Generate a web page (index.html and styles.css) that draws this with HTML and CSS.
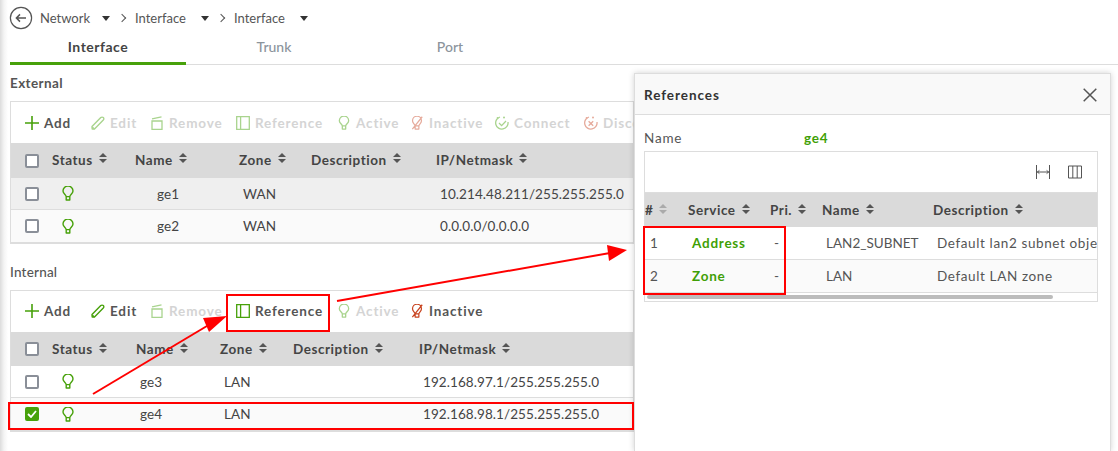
FILE: index.html
```html
<!DOCTYPE html>
<html lang="en">
<head>
<meta charset="utf-8">
<title>Interface</title>
<link rel="stylesheet" href="styles.css">
</head>
<body>
<svg class="defs" width="0" height="0">
  <defs>
    <symbol id="i-plus" viewBox="0 0 14 14"><path d="M7 0v14M0 7h14" fill="none" stroke="currentColor" stroke-width="1.6"/></symbol>
    <symbol id="i-edit" viewBox="0 0 14 14"><path d="M1 10.5 9.8 1.6a1.7 1.7 0 0 1 2.5 2.5L3.5 13H1.2z" fill="none" stroke="currentColor" stroke-width="1.4" stroke-linejoin="round"/><path d="M1.2 10.8 3.4 13" fill="none" stroke="currentColor" stroke-width="1.2"/></symbol>
    <symbol id="i-remove" viewBox="0 0 14 14"><path d="M2 5h10v8.5H2zM2 2.8 11.5.8" fill="none" stroke="currentColor" stroke-width="1.3"/></symbol>
    <symbol id="i-ref" viewBox="0 0 14 14"><path d="M.7.7h12.6v12.6H.7zM4.6.7v12.6" fill="none" stroke="currentColor" stroke-width="1.3"/></symbol>
    <symbol id="i-bulb" viewBox="0 0 12 15"><path d="M4.2 10.6C3.8 8.6 1 7.6 1 5a5 5 0 0 1 10 0c0 2.6-2.8 3.6-3.2 5.6zM4.2 10.6V14h3.6v-3.4" fill="none" stroke="currentColor" stroke-width="1.4" stroke-linejoin="round"/></symbol>
    <symbol id="i-off" viewBox="0 0 14 15"><path d="M5 10.6C4.6 8.6 2.2 7.6 2.2 5a4.8 4.8 0 0 1 9.6 0c0 2.6-2.4 3.6-2.8 5.6zM5 10.6V14h4v-3.4M12.6.8 2 14" fill="none" stroke="currentColor" stroke-width="1.3" stroke-linejoin="round"/></symbol>
    <symbol id="i-conn" viewBox="0 0 14 14"><path d="M5 1a6.2 6.2 0 1 0 8 5" fill="none" stroke="currentColor" stroke-width="1.3"/><path d="M4 7l2.6 2.6L11 5" fill="none" stroke="currentColor" stroke-width="1.3"/><circle cx="2.6" cy="2" r="1" fill="currentColor"/><circle cx="9" cy="1.6" r="1" fill="currentColor"/></symbol>
    <symbol id="i-disc" viewBox="0 0 14 14"><path d="M5 1a6.2 6.2 0 1 0 8 5" fill="none" stroke="currentColor" stroke-width="1.3"/><path d="M4.6 5.2l4.6 4.6M9.2 5.2 4.6 9.8" fill="none" stroke="currentColor" stroke-width="1.3"/><circle cx="2.6" cy="2" r="1" fill="currentColor"/><circle cx="9" cy="1.6" r="1" fill="currentColor"/></symbol>
    <symbol id="i-sort" viewBox="0 0 8 10"><path d="M4 0 8 4H0zM4 10 0 6h8z" fill="currentColor"/></symbol>
  </defs>
</svg>

<nav class="crumbs">
  <svg class="back" width="24" height="24" viewBox="0 0 24 24"><circle cx="12" cy="12" r="10.6" fill="none" stroke="#555" stroke-width="1.2"/><path d="M17 12H7.5M11 8.4 7.4 12l3.6 3.6" fill="none" stroke="#555" stroke-width="1.5"/></svg>
  <span class="crumb c1">Network</span><i class="caret"></i><i class="chev"></i>
  <span class="crumb c2">Interface</span><i class="caret"></i><i class="chev"></i>
  <span class="crumb c2">Interface</span><i class="caret"></i>
</nav>

<div class="tabs">
  <span class="tab on">Interface</span>
  <span class="tab">Trunk</span>
  <span class="tab">Port</span>
</div>

<main class="main">
  <h2 class="sec sec-ext">External</h2>
  <section class="box ext">
    <div class="bar">
      <span class="btn w-add"><svg class="ic plus"><use href="#i-plus"/></svg>Add</span>
      <span class="btn w-edit off"><svg class="ic"><use href="#i-edit"/></svg>Edit</span>
      <span class="btn w-rem off"><svg class="ic"><use href="#i-remove"/></svg>Remove</span>
      <span class="btn w-ref off"><svg class="ic"><use href="#i-ref"/></svg>Reference</span>
      <span class="btn w-act off"><svg class="ic"><use href="#i-bulb"/></svg>Active</span>
      <span class="btn w-ina off red"><svg class="ic"><use href="#i-off"/></svg>Inactive</span>
      <span class="btn w-con off"><svg class="ic"><use href="#i-conn"/></svg>Connect</span>
      <span class="btn off red"><svg class="ic"><use href="#i-disc"/></svg>Disconnect</span>
    </div>
    <div class="row head">
      <span class="cb"></span>
      <span class="th">Status<svg class="so"><use href="#i-sort"/></svg></span>
      <span class="th">Name<svg class="so"><use href="#i-sort"/></svg></span>
      <span class="th">Zone<svg class="so"><use href="#i-sort"/></svg></span>
      <span class="th">Description<svg class="so"><use href="#i-sort"/></svg></span>
      <span class="th">IP/Netmask<svg class="so"><use href="#i-sort"/></svg></span>
    </div>
    <div class="row item alt">
      <span class="cb"></span><svg class="blb"><use href="#i-bulb"/></svg>
      <span class="td nm">ge1</span><span class="td in">WAN</span><span class="td"></span><span class="td in">10.214.48.211/255.255.255.0</span>
    </div>
    <div class="row item soft">
      <span class="cb"></span><svg class="blb"><use href="#i-bulb"/></svg>
      <span class="td nm">ge2</span><span class="td in">WAN</span><span class="td"></span><span class="td in">0.0.0.0/0.0.0.0</span>
    </div>
  </section>

  <h2 class="sec sec-int">Internal</h2>
  <section class="box int">
    <div class="bar">
      <span class="btn w-add"><svg class="ic plus"><use href="#i-plus"/></svg>Add</span>
      <span class="btn w-edit"><svg class="ic"><use href="#i-edit"/></svg>Edit</span>
      <span class="btn w-rem off"><svg class="ic"><use href="#i-remove"/></svg>Remove</span>
      <span class="btn w-ref"><svg class="ic"><use href="#i-ref"/></svg>Reference</span>
      <span class="btn w-act off"><svg class="ic"><use href="#i-bulb"/></svg>Active</span>
      <span class="btn w-ina red"><svg class="ic"><use href="#i-off"/></svg>Inactive</span>
    </div>
    <div class="row head">
      <span class="cb"></span>
      <span class="th">Status<svg class="so"><use href="#i-sort"/></svg></span>
      <span class="th">Name<svg class="so"><use href="#i-sort"/></svg></span>
      <span class="th">Zone<svg class="so"><use href="#i-sort"/></svg></span>
      <span class="th">Description<svg class="so"><use href="#i-sort"/></svg></span>
      <span class="th">IP/Netmask<svg class="so"><use href="#i-sort"/></svg></span>
    </div>
    <div class="row item">
      <span class="cb"></span><svg class="blb"><use href="#i-bulb"/></svg>
      <span class="td in">ge3</span><span class="td in">LAN</span><span class="td"></span><span class="td in">192.168.97.1/255.255.255.0</span>
    </div>
    <div class="row item soft">
      <span class="cb checked"><svg width="10" height="8" viewBox="0 0 10 8"><path d="M1 4l3 3 5-6" fill="none" stroke="#fff" stroke-width="1.8"/></svg></span><svg class="blb"><use href="#i-bulb"/></svg>
      <span class="td in">ge4</span><span class="td in">LAN</span><span class="td"></span><span class="td in">192.168.98.1/255.255.255.0</span>
    </div>
  </section>
</main>

<aside class="panel">
  <header class="p-head">
    <span class="p-title">References</span>
    <svg width="14" height="14" viewBox="0 0 14 14"><path d="M.7.7l12.6 12.6M13.3.7.7 13.3" fill="none" stroke="#555" stroke-width="1.5"/></svg>
  </header>
  <div class="p-name"><span class="p-lbl">Name</span><b class="p-val">ge4</b></div>
  <div class="p-box">
    <div class="p-bar">
      <svg width="14" height="14" viewBox="0 0 14 14"><path d="M.5 0v14M13.5 0v14M1 7h12M3.4 5.4 1.4 7l2 1.6M10.6 5.4l2 1.6-2 1.6" fill="none" stroke="#555" stroke-width="1"/></svg>
      <svg width="14" height="14" viewBox="0 0 14 14"><path d="M.5 1h13v12H.5zM4.8 1v12M9.2 1v12" fill="none" stroke="#555" stroke-width="1"/></svg>
    </div>
    <div class="p-row p-thead">
      <span class="th">#<svg class="so so-lt"><use href="#i-sort"/></svg></span>
      <span class="th">Service<svg class="so"><use href="#i-sort"/></svg></span>
      <span class="th">Pri.<svg class="so"><use href="#i-sort"/></svg></span>
      <span class="th">Name<svg class="so"><use href="#i-sort"/></svg></span>
      <span class="th">Description<svg class="so"><use href="#i-sort"/></svg></span>
    </div>
    <div class="p-row p-item">
      <span class="pd">1</span><b class="link">Address</b><span class="pd">-</span><span class="pd">LAN2_SUBNET</span><span class="pd">Default lan2 subnet object</span>
    </div>
    <div class="p-row p-item soft">
      <span class="pd">2</span><b class="link">Zone</b><span class="pd">-</span><span class="pd">LAN</span><span class="pd">Default LAN zone</span>
    </div>
    <div class="p-scroll"><i class="p-thumb"></i></div>
  </div>
</aside>

<svg class="notes" width="1118" height="451" viewBox="0 0 1118 451">
  <g fill="none" stroke="#f00" stroke-width="2">
    <rect x="227" y="295" width="102" height="36"/>
    <rect x="9" y="403" width="624" height="26"/>
    <rect x="644" y="227" width="141" height="67"/>
    <path d="M93 394 212 323"/>
    <path d="M337 301 610 253"/>
  </g>
  <path d="M227 316 209 332 203 318z" fill="#f00"/>
  <path d="M627 250 609 261 607 245z" fill="#f00"/>
</svg>
</body>
</html>
```
FILE: styles.css
```css
* { box-sizing: border-box; }
html, body { margin: 0; height: 100%; overflow: hidden; }
body {
  width: 1118px;
  height: 451px;
  position: relative;
  padding-left: 10px;
  font-family: Lato, "Open Sans", sans-serif;
  font-size: 13.5px;
  color: #333;
  background: linear-gradient(90deg, #dcdcdc 0, #f4f4f4 4px, #fff 8px) no-repeat left top / 8px 100% #fff;
}
.defs { position: absolute; }

.crumbs { height: 36px; display: flex; align-items: center; color: #555; font-size: 13px; }
.back { margin-right: 7px; margin-left: -1px; }
.crumb { display: inline-block; }
.c1 { width: 62px; }
.c2 { width: 66px; }
.caret { width: 0; height: 0; border: 4.5px solid transparent; border-top: 5px solid #333; border-bottom: 0; margin-right: 10px; }
.chev { width: 6px; height: 6px; border-top: 1.5px solid #555; border-right: 1.5px solid #555; transform: rotate(45deg); margin-right: 10px; margin-left: -1px; }

.tabs { display: flex; height: 29px; border-bottom: 1px solid #ddd; padding-top: 1px; width: 1108px; }
.tab { width: 176px; text-align: center; font-size: 14px; font-weight: 500; color: #8c949c; border-bottom: 3px solid transparent; height: 28px; margin-bottom: -1px; padding-top: 1px; }
.tab.on { color: #444; font-weight: 700; letter-spacing: .5px; border-bottom-color: #47a10a; }

.main { width: 624px; }
.sec { margin: 0; font-size: 13.5px; font-weight: 700; color: #555; line-height: 18px; letter-spacing: .4px; }
.sec-ext { padding-top: 9px; height: 36px; }
.sec-int { padding-top: 19px; height: 46px; font-weight: 500; letter-spacing: .2px; }

.box { border: 1px solid #ddd; border-bottom-width: 2px; }
.bar { height: 41px; display: flex; align-items: center; padding-left: 14px; white-space: nowrap; }
.int .bar { padding-bottom: 2px; }
.btn { display: inline-flex; align-items: center; gap: 5px; font-weight: 700; font-size: 13.5px; color: #555; letter-spacing: .85px; flex: none; }
.ic { width: 14px; height: 14px; color: #47a10a; flex: none; }
.btn.off { color: #d4d4d4; }
.btn.off .ic { color: #a9d48e; }
.btn.red .ic { color: #c8431f; }
.btn.off.red .ic { color: #e6ab9c; }
.w-add { width: 66px; }
.w-edit { width: 59px; }
.w-rem { width: 86px; }
.w-ref { width: 101px; }
.w-act { width: 73px; }
.w-ina { width: 85px; }
.w-con { width: 89px; }

.row { display: grid; align-items: center; }
.ext .row { grid-template-columns: 41px 83px 104px 72px 125px 1fr; }
.int .row { grid-template-columns: 41px 84px 84px 73px 126px 1fr; }
.cb { width: 14px; height: 14px; margin-left: 14px; border: 2px solid #8a8f98; border-radius: 2px; background: #fff; display: flex; align-items: center; justify-content: center; }
.cb.checked { background: #47a10a; border-color: #47a10a; }
.head { height: 35px; background: #dadada; padding-bottom: 2px; }
.int .head { height: 34px; padding-bottom: 0; }
.ext .head .cb { margin-top: 2px; }
.th { font-weight: 700; font-size: 13.5px; color: #444; display: inline-flex; align-items: center; gap: 6px; white-space: nowrap; letter-spacing: .55px; }
.so { width: 8px; height: 10px; color: #555; flex: none; margin-top: -3px; }
.so-lt { color: #aaa; }
.item { height: 32px; border-bottom: 1px solid #ddd; font-size: 13.5px; color: #444; letter-spacing: .08px; }
.item:last-child { border-bottom: 0; }
.alt { background: #efefef; }
.soft { background: #fafafa; }
.blb { width: 12px; height: 15px; color: #47a10a; margin-left: 10px; }
.td { white-space: nowrap; }
.in { padding-left: 4px; }
.nm { padding-left: 22px; }

.panel { position: absolute; left: 634px; top: 73px; width: 477px; height: 378px; background: #fff; border: 1px solid #ddd; border-bottom: 0; box-shadow: 0 0 6px rgba(0,0,0,.18); }
.p-head { height: 41px; display: flex; justify-content: space-between; align-items: center; padding: 1px 13px 0 9px; background: #f9f9f9; border-bottom: 1px solid #ddd; }
.p-title { font-weight: 700; font-size: 13.5px; color: #333; letter-spacing: .95px; }
.p-name { height: 36px; display: flex; align-items: center; padding-left: 9px; font-size: 13.5px; color: #555; padding-top: 9px; }
.p-lbl { width: 160px; letter-spacing: .8px; }
.p-val { color: #3f9f06; font-weight: 700; letter-spacing: .8px; }
.p-box { margin-left: 9px; width: 454px; border: 1px solid #ddd; }
.p-bar { height: 41px; display: flex; justify-content: flex-end; align-items: center; gap: 18px; padding-right: 15px; border-bottom: 1px solid #ddd; }
.p-row { display: grid; grid-template-columns: 43px 82px 52px 111px 1fr; align-items: center; overflow: hidden; white-space: nowrap; }
.p-thead { height: 34px; background: #dadada; }
.p-item { height: 33px; border-bottom: 1px solid #ddd; font-size: 13.5px; color: #555; }
.p-item .pd:first-child { padding-left: 5px; }
.p-item .pd:nth-child(3) { padding-left: 4px; }
.p-item .pd:nth-child(4) { padding-left: 4px; }
.p-item .pd:nth-child(5) { padding-left: 4px; letter-spacing: .62px; }
.link { color: #3f9f06; font-weight: 700; padding-left: 4px; letter-spacing: .75px; }
.p-scroll { height: 8px; padding: 2px 0 0 2px; }
.p-thumb { display: block; width: 406px; height: 4px; background: #bcbcbc; border-radius: 2px; }

.notes { position: absolute; left: 0; top: 0; pointer-events: none; }
```
